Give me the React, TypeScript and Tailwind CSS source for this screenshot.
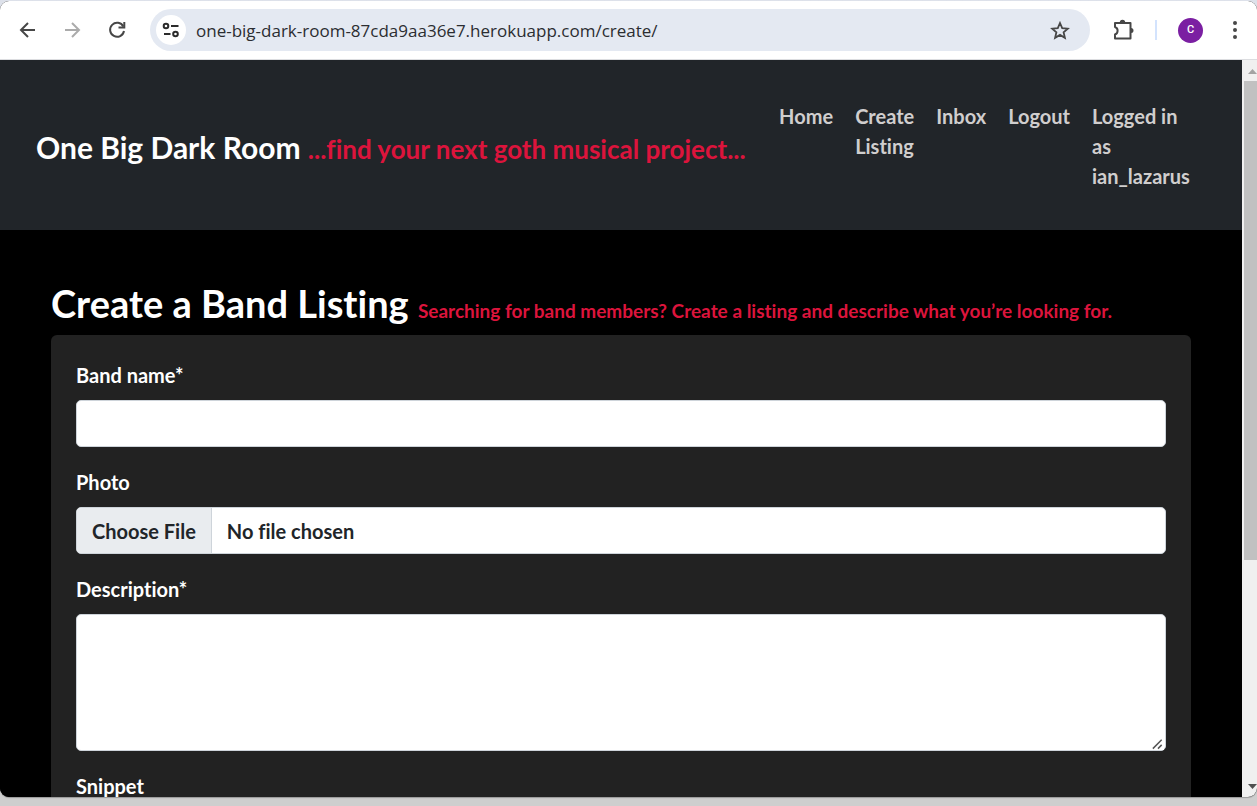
import React from 'react';

const iconButton = 'flex size-6 shrink-0 items-center justify-center';
const field = 'block w-full rounded-[5px] border border-[#ced4da] bg-white text-[#212529]';
const label = 'mb-[9px] block text-[20px] leading-[31px] font-bold text-white';

function BrowserBar() {
  return (
    <header className="flex h-[59px] shrink-0 items-center border-b border-[#dcdde0] bg-white pr-[10px] pl-4 text-[#474747]">
      <button aria-label="Back" className={iconButton}>
        <svg viewBox="0 0 24 24" className="size-6" fill="none" stroke="currentColor" strokeWidth="2">
          <path d="M19 12H5.500M12 5l-7 7 7 7" />
        </svg>
      </button>
      <button aria-label="Forward" className="ml-5 flex size-6 shrink-0 items-center justify-center text-[#ababab]">
        <svg viewBox="0 0 24 24" className="size-6" fill="none" stroke="currentColor" strokeWidth="2">
          <path d="M5 12h13.500M12 5l7 7-7 7" />
        </svg>
      </button>
      <button aria-label="Reload" className="ml-[21px] flex size-6 shrink-0 items-center justify-center">
        <svg viewBox="0 0 24 24" className="size-6" fill="none" stroke="currentColor" strokeWidth="2">
          <path d="M18.300 8.500A7 7 0 1 0 19 13" />
          <path d="M19.300 4V9.500H13.500" />
        </svg>
      </button>
      <div className="ml-[21px] flex h-[42px] min-w-0 flex-1 items-center rounded-full bg-[#e4e9f2] pr-[18px] pl-[6px]">
        <button aria-label="Site information" className="flex size-[30px] shrink-0 items-center justify-center rounded-full bg-white">
          <svg viewBox="0 0 20 20" className="size-5" fill="none" stroke="#2b2b2b" strokeWidth="2">
            <circle cx="5" cy="6" r="2.300" />
            <path d="M10 6h7.500" />
            <circle cx="14.500" cy="14" r="2.300" />
            <path d="M3 14h6.500" />
          </svg>
        </button>
        <input
          aria-label="Address"
          defaultValue="one-big-dark-room-87cda9aa36e7.herokuapp.com/create/"
          className="ml-[10px] min-w-0 flex-1 bg-transparent pt-px font-['Open_Sans',sans-serif] text-[17px] text-[#2b2d31] outline-none"
        />
        <button aria-label="Bookmark this page" className={iconButton}>
          <svg viewBox="0 0 24 24" className="size-6" fill="none" stroke="currentColor" strokeWidth="1.800">
            <path d="M12 5l2.200 5.100 5.600.5-4.200 3.700 1.300 5.500L12 16.900l-4.900 2.900 1.300-5.500-4.200-3.700 5.600-.5z" />
          </svg>
        </button>
      </div>
      <button aria-label="Extensions" className="ml-[21px] flex size-6 shrink-0 items-center justify-center">
        <svg viewBox="0 0 24 24" className="size-6" fill="none" stroke="currentColor" strokeWidth="2" strokeLinejoin="round">
          <path d="M4 5h15.500v15.500H4v-4a4 4 0 0 0 0-7.500z" />
          <path d="M8.800 4.500a2.700 2.700 0 0 1 5.400 0zM20 10a2.500 2.500 0 0 1 0 5z" fill="currentColor" stroke="none" />
        </svg>
      </button>
      <span className="ml-5 h-5 w-[2px] shrink-0 bg-[#d3e3fd]" />
      <button
        aria-label="Profile"
        className="ml-[21px] flex size-[25px] shrink-0 items-center justify-center rounded-full bg-[#7b1fa2] font-[Roboto,sans-serif] text-[11px] font-medium text-white"
      >
        C
      </button>
      <button aria-label="Menu" className="ml-5 flex size-6 shrink-0 items-center justify-center">
        <svg viewBox="0 0 24 24" className="size-6" fill="currentColor">
          <circle cx="12" cy="5" r="2" />
          <circle cx="12" cy="12" r="2" />
          <circle cx="12" cy="19" r="2" />
        </svg>
      </button>
    </header>
  );
}

function SiteHeader() {
  return (
    <div className="flex items-center bg-[#212529] pt-[41px] pr-[52px] pb-[39px] pl-9">
      <a href="#home" className="shrink-0 pt-1 whitespace-nowrap text-[30px] leading-[45px] text-white">
        One Big Dark Room <small className="text-[26px] text-[#dc143c]">...find your next goth musical project...</small>
      </a>
      <nav className="ml-auto flex items-start gap-[22px] text-[20px] leading-[30px] text-[#d0cece]">
        <a href="#home">Home</a>
        <a href="#create" className="w-min">Create Listing</a>
        <a href="#inbox">Inbox</a>
        <a href="#logout">Logout</a>
        <span className="w-[98px]">Logged in as ian_lazarus</span>
      </nav>
    </div>
  );
}

function ListingForm() {
  return (
    <main className="mx-auto max-w-[1140px] pt-12">
      <h1 className="mb-[7px] whitespace-nowrap text-[38px] leading-[50px] text-white">
        Create a Band Listing{' '}
        <small className="text-[19px] leading-none text-[#dc143c]">
          Searching for band members? Create a listing and describe what you’re looking for.
        </small>
      </h1>
      <form className="rounded-[6px] bg-[#222222] p-[25px]">
        <div className="mb-5">
          <label htmlFor="band-name" className={label}>Band name*</label>
          <input id="band-name" type="text" className={`${field} h-[47px] px-4`} />
        </div>
        <div className="mb-5">
          <label htmlFor="photo" className={label}>Photo</label>
          <input
            id="photo"
            type="file"
            className={`${field} h-[47px] overflow-hidden text-[20px] leading-[45px] file:mr-[15px] file:h-[47px] file:border-r file:border-[#ced4da] file:bg-[#e9ecef] file:px-[15px] file:text-[#212529]`}
          />
        </div>
        <div className="mb-5">
          <label htmlFor="description" className={label}>Description*</label>
          <div className="relative">
            <textarea id="description" className={`${field} h-[137px] resize-y px-4 py-2`} />
            <svg
              viewBox="0 0 14 14"
              className="pointer-events-none absolute right-[2px] bottom-px size-[13px] bg-white"
              fill="none"
              stroke="#555555"
              strokeWidth="1.600"
            >
              <path d="M2 12.500L11.500 3M7.500 12.500L11.500 8.500" />
            </svg>
          </div>
        </div>
        <div className="mb-5">
          <label htmlFor="snippet" className={label}>Snippet</label>
          <input id="snippet" type="text" className={`${field} h-[47px] px-4`} />
        </div>
      </form>
    </main>
  );
}

function ScrollTrack() {
  return (
    <div className="flex w-[15px] shrink-0 flex-col overflow-hidden bg-[#f0f0f0] pl-[2px]">
      <svg viewBox="0 0 13 21" className="h-[21px] w-[13px] shrink-0" fill="#a3a3a3">
        <path d="M4 14L8.500 9L13 14z" />
      </svg>
      <div className="h-[65%] bg-[#c1c1c1]" />
      <svg viewBox="0 0 13 21" className="mt-auto h-[21px] w-[13px] shrink-0" fill="#505050">
        <path d="M4 8H13L8.500 13z" />
      </svg>
    </div>
  );
}

export default function App() {
  return (
    <div className="h-screen bg-linear-to-b from-[#dde1ea] from-50% to-[#cecece] to-50% pt-px pb-[9px]">
      <div className="flex h-full flex-col overflow-hidden rounded-[9px] bg-black shadow-[0_1px_1px_#9a9a9a]">
        <BrowserBar />
        <div className="flex min-h-0 flex-1">
          <div className="min-w-0 flex-1 overflow-hidden bg-black font-[Lato,sans-serif] font-bold [font-variant-ligatures:none]">
            <SiteHeader />
            <ListingForm />
          </div>
          <ScrollTrack />
        </div>
      </div>
    </div>
  );
}
